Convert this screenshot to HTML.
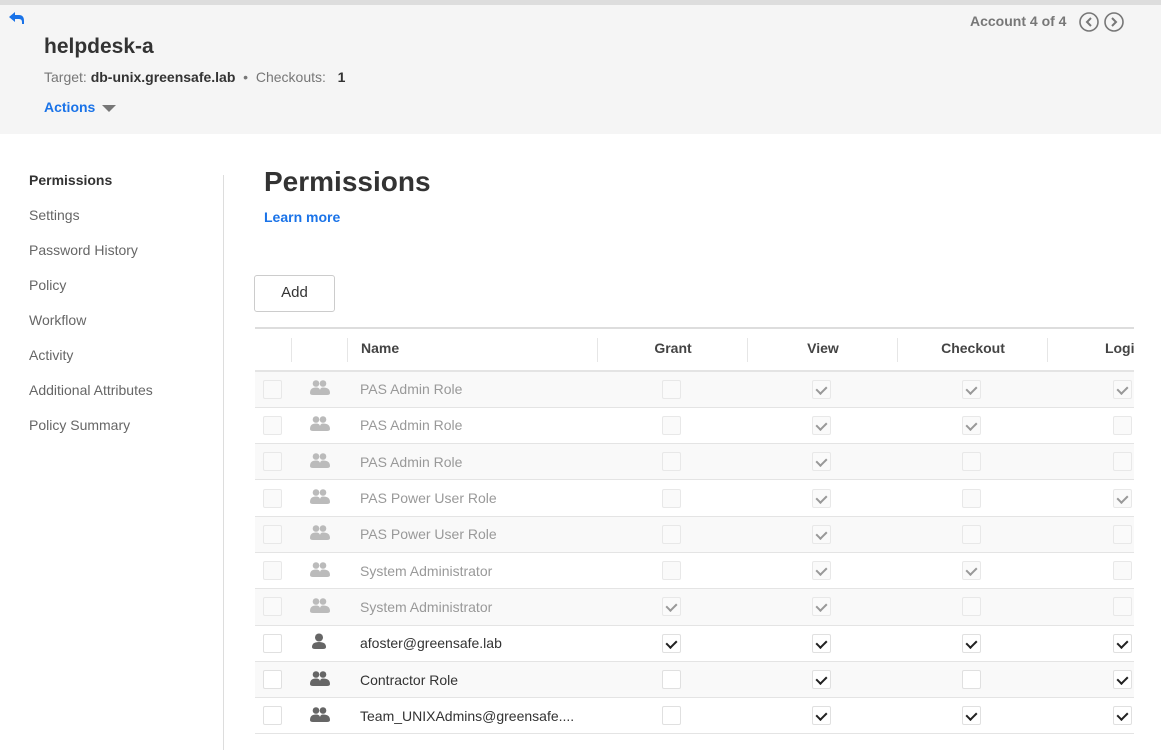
<!DOCTYPE html>
<html><head><meta charset="utf-8"><style>
*{box-sizing:border-box;margin:0;padding:0}
body{width:1161px;height:750px;overflow:hidden;background:#fff;font-family:"Liberation Sans",Arial,sans-serif;position:relative;color:#333}
.top{position:absolute;left:0;top:0;width:1161px;height:5px;background:#ddd}
.hdr{position:absolute;left:0;top:5px;width:1161px;height:129px;background:#f5f5f5}
.abs{position:absolute}
.side a{position:absolute;left:29px;font-size:14px;color:#666;text-decoration:none}
.div{position:absolute;left:223px;top:175px;width:1px;height:575px;background:#ddd}
.wrap{position:absolute;left:255px;top:327px;width:879px;height:423px;overflow:hidden}
table{border-collapse:collapse;table-layout:fixed;width:945px}
td,th{height:36.3px;border-bottom:1px solid #e4e4e4;font-size:14px}
th{font-weight:bold;color:#444;height:43px;border-top:2px solid #ddd;border-bottom:2px solid #e4e4e4;position:relative;padding-bottom:3px}
th.s:after{content:"";position:absolute;right:0;top:9px;height:24px;width:1px;background:#e6e6e6}
tr.o td{background:#f9f9f9}
.c{text-align:center}
.cb{display:inline-block;width:19px;height:19px;border:1px solid #e0e0e0;background:#fff;vertical-align:middle;position:relative;border-radius:2px;margin-left:-3px}
.d .cb{border-color:#e8e8e8;background:#fafafa}
.k:after{content:"";position:absolute;left:5px;top:3px;width:5px;height:8px;border-right:2px solid #222;border-bottom:2px solid #222;transform:rotate(45deg)}
.d .k:after{border-color:#999}
.d td.n{color:#999}
td.n{color:#333;padding-left:12px}
</style></head><body>
<div class="top"></div>
<div class="hdr"></div>
<svg class="abs" style="left:9px;top:12px" width="16" height="12" viewBox="0 0 16 12"><path d="M6 0 L0 5 L6 10 V7 H10 Q13 7 13 10 V12 H15 V9 Q15 3 10 3 H6Z" fill="#1a73e8"/></svg>
<div class="abs" style="left:44px;top:35px;font-size:21px;font-weight:bold;color:#333">helpdesk-a</div>
<div class="abs" style="left:44px;top:69px;font-size:14px;color:#777">Target: <b style="color:#333">db-unix.greensafe.lab</b> &nbsp;•&nbsp; Checkouts: &nbsp; <b style="color:#333">1</b></div>
<div class="abs" style="left:44px;top:99px;font-size:14px;font-weight:bold;color:#1a73e8">Actions</div>
<div class="abs" style="left:102px;top:105px;width:0;height:0;border-left:7px solid transparent;border-right:7px solid transparent;border-top:7px solid #777"></div>
<div class="abs" style="left:970px;top:13px;font-size:14px;font-weight:bold;color:#777">Account 4 of 4</div>
<svg class="abs" style="left:1079px;top:12px" width="46" height="20" viewBox="0 0 46 20"><circle cx="10" cy="10" r="9" fill="none" stroke="#777" stroke-width="1.6"/><path d="M12 6 L8 10 L12 14" fill="none" stroke="#777" stroke-width="2"/><circle cx="35" cy="10" r="9" fill="none" stroke="#777" stroke-width="1.6"/><path d="M33 6 L37 10 L33 14" fill="none" stroke="#777" stroke-width="2"/></svg>
<div class="side">
<a style="top:172px;color:#333;font-weight:bold">Permissions</a>
<a style="top:207px">Settings</a>
<a style="top:242px">Password History</a>
<a style="top:277px">Policy</a>
<a style="top:312px">Workflow</a>
<a style="top:347px">Activity</a>
<a style="top:382px">Additional Attributes</a>
<a style="top:417px">Policy Summary</a>
</div>
<div class="div"></div>
<div class="abs" style="left:264px;top:166px;font-size:28px;font-weight:bold;color:#333">Permissions</div>
<div class="abs" style="left:264px;top:209px;font-size:14px;font-weight:bold;color:#1a73e8">Learn more</div>
<div class="abs" style="left:254px;top:275px;width:81px;height:37px;border:1px solid #ccc;border-radius:3px;background:#fff;font-size:15px;text-align:center;line-height:34px;color:#333">Add</div>
<svg width="0" height="0" style="position:absolute"><defs>
<g id="grp"><circle cx="7" cy="4.5" r="3.3"/><circle cx="14" cy="4.5" r="3.3"/><path d="M1 14 Q1 8.5 7 8.5 Q10.5 8.5 11 11 Q11.5 8.5 14 8.5 Q21 8.5 21 14 Q21 16 18 16 H4 Q1 16 1 14Z"/></g>
<g id="usr"><circle cx="10" cy="4.5" r="4"/><path d="M3 14 Q3 9 10 9 Q17 9 17 14 Q17 16 14 16 H6 Q3 16 3 14Z"/></g>
</defs></svg>
<div class="wrap"><table>
<colgroup><col style="width:37px"><col style="width:56px"><col style="width:250px"><col style="width:150px"><col style="width:150px"><col style="width:150px"><col style="width:152px"></colgroup>
<tr><th class="s"></th><th class="s"></th><th class="s" style="text-align:left;padding-left:13px">Name</th><th class="s">Grant</th><th class="s">View</th><th class="s">Checkout</th><th>Login</th></tr>
<tr class="o d"><td class="c"><span class="cb"></span></td><td class="c"><svg width="22" height="17" fill="#bbb"><use href="#grp"/></svg></td><td class="n">PAS Admin Role</td><td class="c"><span class="cb"></span></td><td class="c"><span class="cb k"></span></td><td class="c"><span class="cb k"></span></td><td class="c"><span class="cb k"></span></td></tr>
<tr class="d"><td class="c"><span class="cb"></span></td><td class="c"><svg width="22" height="17" fill="#bbb"><use href="#grp"/></svg></td><td class="n">PAS Admin Role</td><td class="c"><span class="cb"></span></td><td class="c"><span class="cb k"></span></td><td class="c"><span class="cb k"></span></td><td class="c"><span class="cb"></span></td></tr>
<tr class="o d"><td class="c"><span class="cb"></span></td><td class="c"><svg width="22" height="17" fill="#bbb"><use href="#grp"/></svg></td><td class="n">PAS Admin Role</td><td class="c"><span class="cb"></span></td><td class="c"><span class="cb k"></span></td><td class="c"><span class="cb"></span></td><td class="c"><span class="cb"></span></td></tr>
<tr class="d"><td class="c"><span class="cb"></span></td><td class="c"><svg width="22" height="17" fill="#bbb"><use href="#grp"/></svg></td><td class="n">PAS Power User Role</td><td class="c"><span class="cb"></span></td><td class="c"><span class="cb k"></span></td><td class="c"><span class="cb"></span></td><td class="c"><span class="cb k"></span></td></tr>
<tr class="o d"><td class="c"><span class="cb"></span></td><td class="c"><svg width="22" height="17" fill="#bbb"><use href="#grp"/></svg></td><td class="n">PAS Power User Role</td><td class="c"><span class="cb"></span></td><td class="c"><span class="cb k"></span></td><td class="c"><span class="cb"></span></td><td class="c"><span class="cb"></span></td></tr>
<tr class="d"><td class="c"><span class="cb"></span></td><td class="c"><svg width="22" height="17" fill="#bbb"><use href="#grp"/></svg></td><td class="n">System Administrator</td><td class="c"><span class="cb"></span></td><td class="c"><span class="cb k"></span></td><td class="c"><span class="cb k"></span></td><td class="c"><span class="cb"></span></td></tr>
<tr class="o d"><td class="c"><span class="cb"></span></td><td class="c"><svg width="22" height="17" fill="#bbb"><use href="#grp"/></svg></td><td class="n">System Administrator</td><td class="c"><span class="cb k"></span></td><td class="c"><span class="cb k"></span></td><td class="c"><span class="cb"></span></td><td class="c"><span class="cb"></span></td></tr>
<tr><td class="c"><span class="cb"></span></td><td class="c"><svg width="22" height="17" fill="#666"><use href="#usr"/></svg></td><td class="n">afoster@greensafe.lab</td><td class="c"><span class="cb k"></span></td><td class="c"><span class="cb k"></span></td><td class="c"><span class="cb k"></span></td><td class="c"><span class="cb k"></span></td></tr>
<tr class="o"><td class="c"><span class="cb"></span></td><td class="c"><svg width="22" height="17" fill="#666"><use href="#grp"/></svg></td><td class="n">Contractor Role</td><td class="c"><span class="cb"></span></td><td class="c"><span class="cb k"></span></td><td class="c"><span class="cb"></span></td><td class="c"><span class="cb k"></span></td></tr>
<tr><td class="c"><span class="cb"></span></td><td class="c"><svg width="22" height="17" fill="#666"><use href="#grp"/></svg></td><td class="n">Team_UNIXAdmins@greensafe....</td><td class="c"><span class="cb"></span></td><td class="c"><span class="cb k"></span></td><td class="c"><span class="cb k"></span></td><td class="c"><span class="cb k"></span></td></tr>
</table></div>
</body></html>
